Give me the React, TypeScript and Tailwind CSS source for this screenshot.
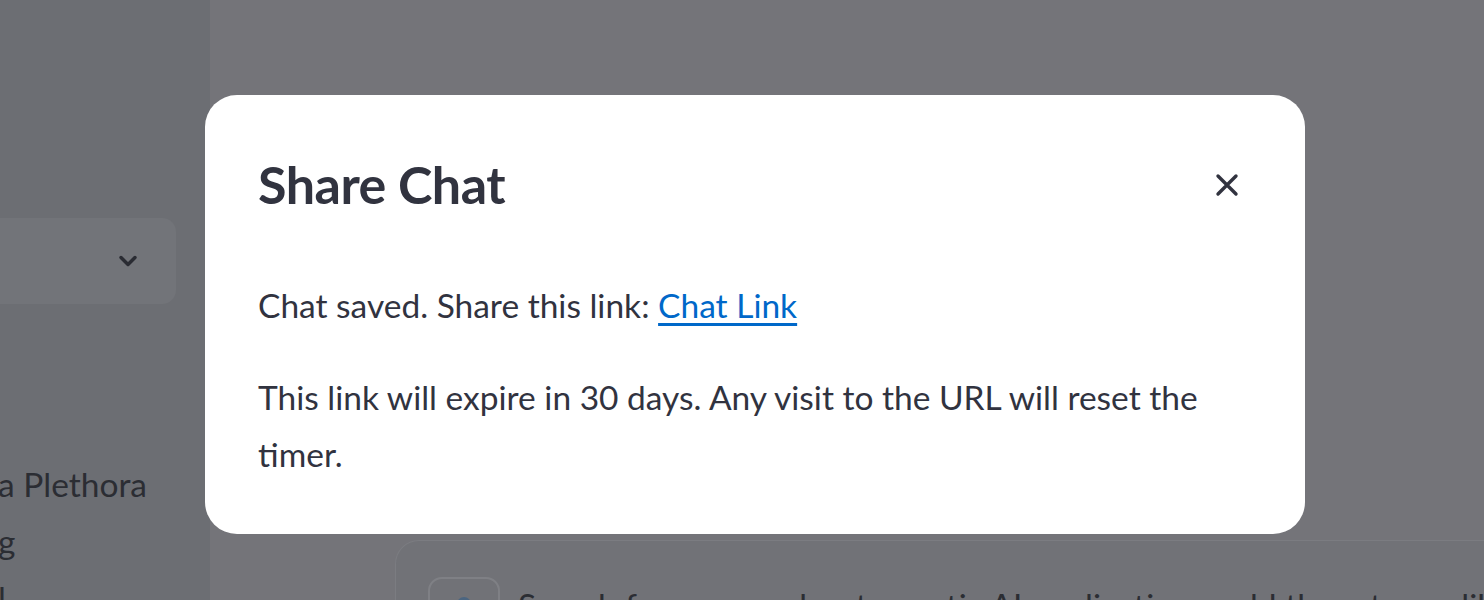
import { ChevronDown } from 'lucide-react'

const FONT = "font-['Lato','Noto_Sans',sans-serif]"

function CloseIcon() {
  return (
    <svg width="24" height="24" viewBox="0 0 24 24" fill="none">
      <path d="M3 3L21 21M21 3L3 21" stroke="#31333F" strokeWidth="3.4" strokeLinecap="round" />
    </svg>
  )
}

export default function App() {
  return (
    <div className={`relative w-[1484px] h-[600px] overflow-hidden flex bg-[#747479] text-[#2b2d33] ${FONT}`}>
      {/* sidebar, dimmed */}
      <aside className="w-[210px] shrink-0 bg-[#6c6e73] flex flex-col overflow-hidden">
        <div className="shrink-0 mt-[218px] h-[86px] w-[176px] rounded-r-[14px] bg-[#727479] flex items-center justify-end pr-[34px]">
          <ChevronDown className="w-[28px] h-[28px] text-[#2a2c33]" strokeWidth={3} />
        </div>
        <div className="shrink-0 mt-[152px] flex flex-col text-[33.5px] leading-[57px] -ml-[2px] whitespace-nowrap">
          <span>a Plethora</span>
          <span>g</span>
          <span>l</span>
        </div>
      </aside>

      {/* main area */}
      <main className="flex-1 flex flex-col justify-end">
        <div className="ml-[185px] h-[60px] rounded-tl-[24px] border-t border-l border-[#7b7c81] bg-[#717277] flex items-start pt-[36px] pl-[32px] gap-[18px]">
          <div className="shrink-0 w-[72px] h-[40px] rounded-[14px] border-2 border-[#7f8085] flex justify-center pt-[18px]">
            <div className="w-[14px] h-[14px] rounded-full bg-[#4b6580]" />
          </div>
          <div className="text-[33.5px] leading-none pt-[12px] whitespace-nowrap">
            Search for papers about agentic AI applications, add them to my library
          </div>
        </div>
      </main>

      {/* share dialog */}
      <div className="absolute inset-0 pt-[95px] pl-[205px]">
        <div className="w-[1100px] h-[439px] bg-white rounded-[32px] px-[53px] pt-[54px] text-[#31333F]">
          <div className="flex items-start justify-between">
            <h1 className="text-[52px] font-bold leading-[70px] tracking-[-0.5px]">Share Chat</h1>
            <button className="mt-[24px] mr-[13px]">
              <CloseIcon />
            </button>
          </div>
          <div className="mt-[58px] text-[33.5px] leading-[57px]">
            <p>
              Chat saved. Share this link:{' '}
              <a href="#" className="text-[#0068c9] underline underline-offset-[5px]">Chat Link</a>
            </p>
            <p className="mt-[35px]">
              This link will expire in 30 days. Any visit to the URL will reset the timer.
            </p>
          </div>
        </div>
      </div>
    </div>
  )
}
